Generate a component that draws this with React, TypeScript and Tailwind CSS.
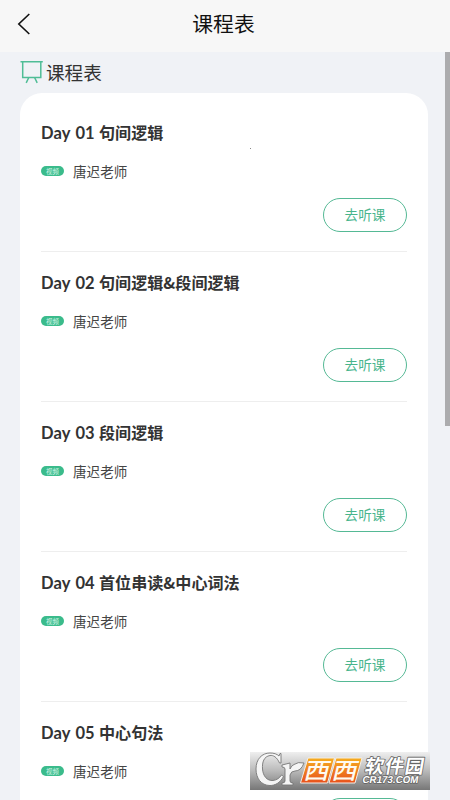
const LESSONS = [
  { day: "Day 01", title: "句间逻辑" },
  { day: "Day 02", title: "句间逻辑&段间逻辑" },
  { day: "Day 03", title: "段间逻辑" },
  { day: "Day 04", title: "首位串读&中心词法" },
  { day: "Day 05", title: "中心句法" },
];

function BoardIcon() {
  return (
    <svg width="24" height="24" viewBox="0 0 24 24" fill="none" stroke="#4fbd96" strokeWidth="1.5">
      <path d="M0.5 1.7H22.8M2.7 1.7V17.4H20.8V1.7" />
      <path d="M8.8 17.5L6.2 22.8M14.6 17.5L17.2 22.8" />
    </svg>
  );
}

function Lesson({ day, title }: { day: string; title: string }) {
  return (
    <li className="flex h-[150px] shrink-0 flex-col border-b border-[#eeeeee]">
      <h2 className="mt-[18px] flex h-6 items-center whitespace-pre text-[16.1px] font-bold text-[#333333]">
        <span className="w-[58px] pt-[3px] font-['Lato','Noto_Sans_CJK_SC',sans-serif] text-[16.5px] tracking-[0.1px] [word-spacing:1.2px]">{day}</span>
        <span>{title}</span>
      </h2>
      <div className="mt-[17px] flex h-5 items-center">
        <span className="flex h-[10px] w-[23px] items-center justify-center rounded-full bg-[#3abb8b] text-[6.5px] leading-none text-[#d4f6e9]">
          视频
        </span>
        <span className="ml-[9px] text-[13.6px] text-[#444444]">唐迟老师</span>
      </div>
      <button className="mt-[17px] h-[34px] w-[84px] self-end rounded-full border-[1.3px] border-[#55b995] pb-[2px] text-[13.6px] text-[#48b58d]">
        去听课
      </button>
    </li>
  );
}

function Watermark() {
  return (
    <div className="absolute left-[250px] top-[752px] h-[38px] w-[180px] bg-gradient-to-b from-[#efefef] via-[#b9b9b9] to-[#777777]">
      <svg width="180" height="38" viewBox="0 0 180 38">
        <defs>
          <linearGradient id="tile" x1="0" y1="0" x2="0" y2="1">
            <stop offset="0" stopColor="#f6ae20" />
            <stop offset="1" stopColor="#e8501c" />
          </linearGradient>
        </defs>
        {/* leafed "Cr" mark */}
        <g fill="#f5f5f5" stroke="#777777" strokeWidth="0.9" strokeLinejoin="round">
          <path d="M31 1.5V11H29.5C27 5 23 3 20 3.5C14 4.5 12 10 12.5 17C13 24 17 29 23 28.5C27 28 29.5 26 31.5 23L33.5 24.5C30 31 25 33.5 20 33.5C11 33.5 6 26 6 17C6 7 12 1 20 1C24 1 27 2 29 4L30 1.5Z" />
          <path d="M32 13L40 11V17Q41.5 13.5 44 12.5Q48 9.5 54 11Q51 19 45 19Q41 19 40 23V29Q40 31 43 31V33H32V31Q35 31 35 29V17Q35 15 32 15Z" />
        </g>
        <g stroke="#f4eee6" strokeWidth="1">
          <path d="M58 6H84.5L77.5 31H50.5Z" fill="url(#tile)" />
          <path d="M86 6H112L105 31H79Z" fill="url(#tile)" />
        </g>
        <g fill="#fffaf0" fontFamily="'Noto Sans CJK SC', sans-serif" fontWeight="500">
          <text transform="translate(53 27) skewX(-14) scale(1.1 1)" fontSize="23">西</text>
          <text transform="translate(81 27) skewX(-14) scale(1.1 1)" fontSize="23">西</text>
        </g>
        <g fill="#ffffff" stroke="#666666" paintOrder="stroke" strokeLinejoin="round">
          <text
            transform="translate(114 20.5) skewX(-10)"
            fontFamily="'Noto Sans CJK SC', sans-serif"
            fontSize="19"
            fontWeight="700"
            strokeWidth="1.6"
            textLength="59"
          >
            软件园
          </text>
          <text
            transform="translate(112 31) skewX(-10)"
            fontFamily="'Liberation Sans', sans-serif"
            fontSize="10"
            fontWeight="700"
            strokeWidth="1.6"
            textLength="56"
            lengthAdjust="spacingAndGlyphs"
          >
            CR173.COM
          </text>
        </g>
      </svg>
    </div>
  );
}

export default function App() {
  return (
    <div className="relative flex h-[800px] w-[450px] flex-col overflow-hidden bg-[#f0f2f6] font-['Noto_Sans_CJK_SC',sans-serif]">
      <header className="grid h-[52px] shrink-0 grid-cols-[1fr_auto_1fr] items-center bg-[#f7f7f7] pb-1 pr-[3px]">
        <svg className="ml-[17px]" width="14" height="22" viewBox="0 0 14 22" fill="none" stroke="#111111" strokeWidth="1.6">
          <path d="M12.3 1L1.8 11L12.3 21" />
        </svg>
        <h1 className="text-[20.8px] text-[#111111]">课程表</h1>
        <span />
      </header>
      <div className="flex min-h-0 flex-1">
        <main className="flex w-[428px] flex-col pl-5">
          <div className="flex h-[41px] shrink-0 items-center gap-[2px] pb-px">
            <BoardIcon />
            <span className="text-[18.6px] text-[#333333]">课程表</span>
          </div>
          <ul className="flex min-h-0 flex-1 flex-col overflow-hidden rounded-t-[22px] bg-white px-[21px] pt-[9px]">
            {LESSONS.map((lesson) => (
              <Lesson key={lesson.day} {...lesson} />
            ))}
          </ul>
        </main>
        <div className="ml-auto h-[374px] w-[5px] bg-[#acacae]" />
      </div>
      <span className="absolute left-[250px] top-[148px] h-px w-px bg-[#888888]" />
      <Watermark />
    </div>
  );
}
